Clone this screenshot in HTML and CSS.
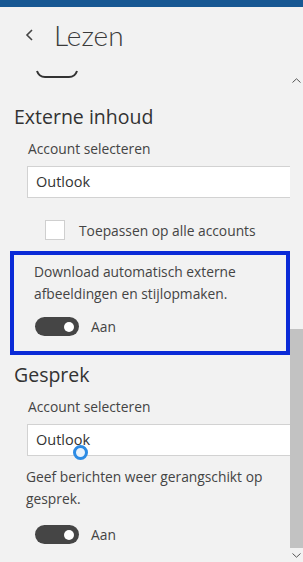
FILE: index.html
```html
<!DOCTYPE html>
<html lang="nl">
<head>
  <meta charset="UTF-8">
  <title>Lezen</title>
  <link rel="stylesheet" href="styles.css">
</head>
<body>

  <div class="topbar"></div>

  <header class="head">
    <span class="back">
      <svg width="9" height="12" viewBox="0 0 9 12"><path d="M7 1 L2 6 L7 11" fill="none" stroke="#444" stroke-width="1.6"/></svg>
    </span>
    <h1>Lezen</h1>
  </header>

  <div class="pane">
    <div class="content">
      <svg class="stub" width="42" height="9" viewBox="0 0 42 9"><path d="M1 1 Q3 7 9 7 L33 7 Q39 7 41 1" fill="none" stroke="#333" stroke-width="2"/></svg>

      <h2>Externe inhoud</h2>
      <label class="lbl">Account selecteren</label>
      <div class="field">Outlook</div>

      <div class="check">
        <span class="box"></span>
        <span>Toepassen op alle accounts</span>
      </div>

      <div class="focus">
        <p class="desc">Download automatisch externe afbeeldingen en stijlopmaken.</p>
        <div class="toggle-row">
          <span class="toggle"><span class="knob"></span></span>
          <span>Aan</span>
        </div>
      </div>

      <h2 class="h-gesprek">Gesprek</h2>
      <label class="lbl">Account selecteren</label>
      <div class="field">Outlook</div>

      <p class="desc plain">Geef berichten weer gerangschikt op gesprek.</p>
      <div class="toggle-row second">
        <span class="toggle"><span class="knob"></span></span>
        <span>Aan</span>
      </div>

      <span class="touch"></span>
    </div>

    <div class="scrollbar">
      <span class="arrow">
        <svg width="9" height="5" viewBox="0 0 9 5"><path d="M0.5 4.5 L4.5 0.8 L8.5 4.5" fill="none" stroke="#555" stroke-width="1"/></svg>
      </span>
      <div class="track"><div class="thumb"></div></div>
      <span class="arrow">
        <svg width="9" height="5" viewBox="0 0 9 5"><path d="M0.5 0.5 L4.5 4.2 L8.5 0.5" fill="none" stroke="#555" stroke-width="1"/></svg>
      </span>
    </div>
  </div>

</body>
</html>
```

FILE: styles.css
```css
body { margin: 0; background: #f2f2f2; color: #444; font-family: "Open Sans", "Noto Sans", sans-serif; height: 562px; overflow: hidden; }
.topbar { height: 7px; background: #175893; }

.head { height: 55px; display: flex; align-items: center; }
.back { width: 25px; padding-left: 25px; display: flex; align-items: center; }
.head h1 { margin: 0 0 0 4px; font-family: "Lato", sans-serif; font-weight: 300; font-size: 28px; color: #3a3a3a; }

.pane { display: flex; height: 500px; }
.content { flex: 1; position: relative; }
.stub { display: block; margin: 8px 0 0 36px; }

h2 { margin: 24px 0 0 14px; font-weight: 400; font-size: 19.5px; line-height: 28px; color: #333; }
h2.h-gesprek { margin-top: 6px; }
.lbl { display: block; margin: 8px 0 0 28px; font-size: 13.8px; line-height: 20px; color: #444; }
.field { margin: 7px 0 0 27px; height: 30px; line-height: 30px; padding-left: 8px; background: #fff; border: 1px solid #d2d2d2; border-right: none; font-size: 14.5px; color: #333; }

.check { display: flex; align-items: center; margin: 22px 0 0 45px; font-size: 13.8px; gap: 14px; }
.check .box { width: 18px; height: 18px; background: #fff; border: 1px solid #cfcfcf; }

.focus { margin: 11px 0 0 10px; width: 252px; border: 4px solid #0b2bd7; padding: 6px 0 15px 20px; }
.desc { margin: 0; font-size: 13.8px; line-height: 22px; color: #444; padding-right: 20px; }
.desc.plain { margin: 10px 0 0 26px; padding-right: 12px; }

.toggle-row { display: flex; align-items: center; gap: 12px; margin-top: 12px; margin-left: 1px; font-size: 13.8px; }
.toggle-row.second { margin: 15px 0 0 35px; }
.toggle { width: 44px; height: 19px; border-radius: 10px; background: #454545; display: flex; align-items: center; justify-content: flex-end; padding-right: 5px; box-sizing: border-box; }
.knob { width: 10px; height: 10px; border-radius: 50%; background: #fff; }

.touch { position: absolute; left: 73px; top: 383px; width: 9px; height: 9px; border: 3px solid #2c8be4; border-radius: 50%; background: #eaf3fc; }

.scrollbar { width: 15px; display: flex; flex-direction: column; }
.arrow { height: 14px; display: flex; align-items: center; justify-content: center; }
.scrollbar .arrow:first-child { margin-top: 11px; }
.track { flex: 1; display: flex; flex-direction: column; justify-content: flex-end; }
.thumb { height: 219px; background: #c2c2c2; }
```
